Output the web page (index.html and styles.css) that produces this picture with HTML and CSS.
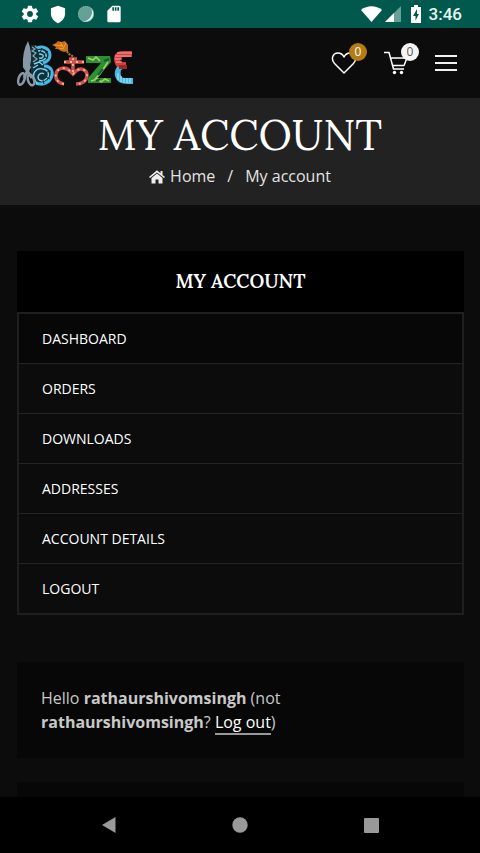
FILE: index.html
```
<!DOCTYPE html>
<html lang="en">
<head>
  <meta charset="UTF-8">
  <meta name="viewport" content="width=device-width, initial-scale=1.0">
  <title>My account</title>
  <link rel="stylesheet" href="styles.css">
</head>
<body>

  <div class="status-bar">
    <div class="status-group">
      <svg width="20" height="20" viewBox="0 0 24 24" fill="#fff"><path d="M19.4 13a7.500 7.500 0 0 0 0-2l2.100-1.600c.2-.2.3-.5.1-.7l-2-3.400c-.1-.2-.4-.3-.6-.2l-2.500 1a7.300 7.300 0 0 0-1.700-1l-.4-2.600a.5.5 0 0 0-.5-.5h-4a.5.5 0 0 0-.5.5L9 5.100a7.700 7.700 0 0 0-1.700 1l-2.500-1c-.2-.1-.5 0-.6.2l-2 3.400c-.1.200-.1.500.1.700L4.500 11a7.500 7.500 0 0 0 0 2l-2.100 1.600c-.2.200-.3.500-.1.700l2 3.400c.1.200.4.300.6.200l2.500-1c.5.400 1.100.7 1.700 1l.4 2.600c0 .300.200.5.5.5h4c.3 0 .5-.2.5-.5l.4-2.600a7.300 7.300 0 0 0 1.700-1l2.500 1c.2.100.5 0 .6-.2l2-3.400c.1-.2.100-.5-.1-.7zM12 15.500a3.500 3.500 0 1 1 0-7 3.500 3.500 0 0 1 0 7z"/></svg>
      <svg width="20" height="20" viewBox="0 0 24 24" fill="#fff"><path d="M12 2 3.500 5v6c0 5.500 3.500 9.500 8.500 12 5-2.500 8.500-6.500 8.500-12V5z"/></svg>
      <svg width="20" height="20" viewBox="0 0 20 20"><circle cx="10" cy="10" r="8" fill="#64a096"/><path d="M15 4a8 8 0 0 1-9 13 9 9 0 0 0 9-13z" fill="#e9f5f2"/><circle cx="10" cy="10" r="7.500" fill="none" stroke="#8abbb1" stroke-dasharray="1 1"/></svg>
      <svg width="20" height="20" viewBox="0 0 24 24" fill="#fff"><path d="M18 2h-8L4 8v12c0 1.100.9 2 2 2h12a2 2 0 0 0 2-2V4a2 2 0 0 0-2-2zm-6 6h-2V4h2zm3 0h-2V4h2zm3 0h-2V4h2z"/></svg>
    </div>
    <div class="status-group status-right">
      <svg width="21" height="18" viewBox="0 0 21 18" fill="#fff"><path d="M10.500 17 0 5C6 0 15 0 21 5z"/></svg>
      <svg width="17" height="18" viewBox="0 0 17 18"><path d="M17 1v16H1z" fill="#69a096"/><path d="M10 8v9H1z" fill="#fff"/></svg>
      <svg class="battery" width="12" height="18" viewBox="0 0 12 18"><path d="M4 0h4v2h3v16H1V2h3z" fill="#fff"/><path d="M7 4 3 11h2.500v4.500L9 9H7z" fill="#00594c"/></svg>
      <span class="clock">3:46</span>
    </div>
  </div>

  <header class="header">
    <a href="#" class="logo" aria-label="Home page">
      <svg width="118" height="52" viewBox="16 36 118 52">
        <!-- B with wave pattern -->
        <path d="M31 44h6l2 2c8-2 13 4 12 10-1 4-3 5-4 7 7 2 9 10 5 16-4 7-13 7-18 4l-3-8z" fill="#10303c"/>
        <path d="M37 47c6-3 13 1 13 7 0 5-4 7-7 8" fill="none" stroke="#48b9e4" stroke-width="3"/>
        <path d="M44 65c7 0 10 6 7 12-3 6-10 7-15 5" fill="none" stroke="#48b9e4" stroke-width="3"/>
        <g fill="none" stroke="#7fd3ec" stroke-width="1.400">
          <path d="M38 50c5-1 9 2 8 6-1 3-4 4-7 4M39 53c3 0 5 1 4 3-1 2-3 1-4 1"/>
          <path d="M35 80c-4-7 1-14 8-12 6 1 7 7 3 10-3 3-8 2-8-2 0-3 4-5 6-3M37 83l-3-6"/>
          <path d="M34 63l5-2 4 3M33 67l5-3"/>
        </g>
        <path d="M42 47l-2 5M48 50l-4 3M48 57l-4-1M51 70l-4 1M50 78l-4-2M44 83l-1-4" stroke="#10303c" stroke-width="1"/>
        <g fill="none" stroke="#8aa5ad" stroke-width="1.200">
          <path d="M32 46l3 2-3 2 4 2-3 3 4 3-4 3M35 45l2 2"/>
        </g>
        <!-- scissors -->
        <path d="M28 40q5 12 2 26l-4 3-3-3q-1-15 5-26z" fill="#8799a6"/>
        <path d="M24 65l8 12M30 65l-6 12" stroke="#8799a6" stroke-width="3"/>
        <g fill="none" stroke="#8799a6" stroke-width="2.500">
          <ellipse cx="21.500" cy="78" rx="3" ry="6" transform="rotate(18 21.500 78)"/>
          <ellipse cx="31" cy="79" rx="3" ry="5.500" transform="rotate(-18 31 79)"/>
        </g>
        <!-- flower and curved letter -->
        <path d="M52 44l4-2 2-2 3 1 4-1 3 4 0 6-4 1-3-1-3-2-3 0 1-2z" fill="#c96a17"/>
        <path d="M55 44l8 1M60 41l3 5M66 42l-3 6M59 47l4 1" stroke="#f0a33a"/>
        <path d="M65 48l4 5 5 3" fill="none" stroke="#a8803c" stroke-width="2" stroke-dasharray="2 1"/>
        <g fill="none" stroke="#d0504f" stroke-width="3.500">
          <path d="M64 61h20M69 58h8M73 57v15"/>
          <path d="M64 83c-6-1-9-5-8-10 1-6 9-8 14-3l3 3 3-3c5-4 11-1 11 4 0 6-5 9-11 9"/>
        </g>
        <g fill="none" stroke="#e8c08c" stroke-width="1.800" stroke-dasharray="2 4">
          <path d="M64 61h20M73 57v15"/>
          <path d="M64 83c-6-1-9-5-8-10 1-6 9-8 14-3l3 3 3-3c5-4 11-1 11 4 0 6-5 9-11 9"/>
        </g>
        <!-- Z -->
        <path d="M86 55h24l1 6-14 16h14v5H88v-5l13-15H86z" fill="#2f8f35"/>
        <path d="M88 57l5 2 3-3 4 4M95 78l5-5 2-3 6-9M91 80l7-2 3 3 4-3 4 2" fill="none" stroke="#9bd45c" stroke-width="1.600"/>
        <path d="M98 74l5-6M104 60l5-2M96 80l4-2" stroke="#125c2b" stroke-width="2"/>
        <!-- E -->
        <path d="M132 50h-9c-6 0-9 3-9 8 0 3 1 5 3 8h9v-5h-5c-1-3 0-5 3-5h8z" fill="#d83c43"/>
        <path d="M117 66c-3 4-3 9 0 13 3 4 8 4 16 4v-6h-9c-3 0-4-4-3-8l5-3z" fill="#45b9df"/>
        <path d="M117 52h15M115 55h16M115 58h7M116 61h6" stroke="#efaaa2"/>
        <path d="M118 72v7M121 75v6M124 77v5M127 77v5M130 77v5" stroke="#b5e8f3"/>
        <path d="M119 64h8v4h-8z" fill="#982b20"/>
      </svg>
    </a>
    <div class="header-tools">
      <a href="#" class="tool" aria-label="Wishlist">
        <svg width="26" height="24" viewBox="0 0 26 24" fill="none" stroke="#fff" stroke-width="1.500"><path d="M13 22 3.500 12.500C0 9 1 2 7 2c3 0 5 2 6 4 1-2 3-4 6-4 6 0 7 7 3.500 10.500z" stroke-linejoin="round"/></svg>
        <span class="badge badge-gold">0</span>
      </a>
      <a href="#" class="tool" aria-label="Cart">
        <svg width="26" height="24" viewBox="0 0 26 24" fill="none" stroke="#fff" stroke-width="1.500"><path d="M1 1.500h5L10.500 18H21M8 7h16l-3 7.500H10"/><circle cx="11.500" cy="21.500" r="1.700" fill="#fff" stroke="none"/><circle cx="18.500" cy="21.500" r="1.700" fill="#fff" stroke="none"/></svg>
        <span class="badge">0</span>
      </a>
      <button type="button" class="menu-btn" aria-label="Menu">
        <svg width="22" height="16" viewBox="0 0 22 16" fill="#f2f2f2"><path d="M0 0h22v2H0zM0 7h22v2H0zM0 14h22v2H0z"/></svg>
      </button>
    </div>
  </header>

  <main class="content">
    <div class="page-title">
      <h1>MY ACCOUNT</h1>
      <nav class="breadcrumbs">
        <a href="#">
          <svg width="16" height="14" viewBox="0 0 16 14" fill="#eee"><path d="M8 3.500 2.500 8v5.500H6.500V9.500h3v4h4V8z"/><path d="M8 .3 0 7l1 1.100L8 2.500l7 5.600L16 7l-2.500-2.100V1h-2v2.200z"/></svg>
          Home
        </a>
        <span>/</span>
        <span>My account</span>
      </nav>
    </div>

    <div class="account">
      <div class="account-nav">
        <h2>MY ACCOUNT</h2>
        <ul>
          <li class="active"><a href="#">DASHBOARD</a></li>
          <li><a href="#">ORDERS</a></li>
          <li><a href="#">DOWNLOADS</a></li>
          <li><a href="#">ADDRESSES</a></li>
          <li><a href="#">ACCOUNT DETAILS</a></li>
          <li><a href="#">LOGOUT</a></li>
        </ul>
      </div>

      <div class="account-box">
        <p>Hello <strong>rathaurshivomsingh</strong> (not <strong>rathaurshivomsingh</strong>? <a href="#">Log out</a>)</p>
      </div>
      <div class="account-box"></div>
    </div>
  </main>

  <div class="nav-bar">
    <button type="button" aria-label="Back"><svg width="16" height="16" viewBox="0 0 16 16" fill="#999"><path d="M1 8 14.500 0v16z"/></svg></button>
    <button type="button" aria-label="Home"><svg width="16" height="16" viewBox="0 0 16 16" fill="#999"><circle cx="8" cy="8" r="7.700"/></svg></button>
    <button type="button" aria-label="Recent apps"><svg width="16" height="16" viewBox="0 0 16 16" fill="#999"><rect x="1" y="1" width="15" height="15" rx="1"/></svg></button>
  </div>

</body>
</html>
```
FILE: styles.css
```
* {
  box-sizing: border-box;
}

body {
  font-family: "Open Sans", "Noto Sans", sans-serif;
  font-size: 16px;
  background-color: #0c0c0c;
  color: #c8c8c8;
  margin: 0;
  display: flex;
  flex-direction: column;
  height: 100vh;
}

a {
  color: #fff;
  text-decoration: none;
}

svg {
  display: block;
}

button {
  background: none;
  border: none;
  padding: 0;
  cursor: pointer;
}

.status-bar {
  flex: none;
  display: flex;
  justify-content: space-between;
  align-items: center;
  height: 28px;
  padding: 0 18px 0 20px;
  background-color: #00594c;
}

.status-group {
  display: flex;
  align-items: center;
  gap: 8px;
}

.status-right {
  gap: 2px;
}

.battery {
  margin-left: 7px;
}

.clock {
  margin-left: 5px;
  font-family: Roboto, sans-serif;
  font-size: 17px;
  font-weight: 500;
  color: #e8f5f2;
}

.header {
  flex: none;
  display: flex;
  justify-content: space-between;
  align-items: center;
  height: 70px;
  padding: 0 23px 0 16px;
}

.header-tools {
  display: flex;
  align-items: center;
  gap: 26px;
}

.tool {
  position: relative;
}

.badge {
  position: absolute;
  top: -8px;
  right: -10px;
  width: 18px;
  height: 18px;
  border-radius: 50%;
  background-color: #f5f5f5;
  color: #555;
  font-size: 12px;
  line-height: 18px;
  text-align: center;
}

.badge-gold {
  background-color: #b47c12;
  color: #fff;
}

.content {
  flex: 1;
  min-height: 0;
  overflow: hidden;
}

.page-title {
  padding: 12px 16px 15px;
  background-color: #222;
  text-align: center;
}

h1 {
  margin: 0 0 3px;
  font-family: Lora, "Liberation Serif", serif;
  font-size: 42px;
  font-weight: 400;
  line-height: 50px;
  color: #fff;
}

.breadcrumbs {
  display: flex;
  justify-content: center;
  gap: 12px;
  line-height: 27px;
  color: #e4e4e4;
}

.breadcrumbs a {
  display: flex;
  align-items: center;
  gap: 5px;
  color: #e4e4e4;
}

.account {
  padding: 46px 16px 0 17px;
}

.account-nav {
  margin-bottom: 47px;
}

h2 {
  margin: 0;
  padding: 16px;
  background-color: #000;
  color: #fff;
  font-family: Lora, "Liberation Serif", serif;
  font-size: 19px;
  font-weight: 600;
  line-height: 29px;
  text-align: center;
}

ul {
  list-style: none;
  margin: 0;
  padding: 0;
  border: 2px solid #1f1f1f;
}

li + li {
  border-top: 1px solid #242424;
}

li a {
  display: block;
  padding: 0 23px;
  font-size: 14px;
  line-height: 49px;
}

.active {
  background-color: #070707;
}

.account-box {
  padding: 24px;
  margin-bottom: 24px;
  background-color: #070707;
}

.account-box p {
  margin: 0;
  line-height: 24px;
}

.account-box a {
  border-bottom: 2px solid #999;
}

.nav-bar {
  flex: none;
  display: flex;
  justify-content: space-between;
  align-items: center;
  height: 56px;
  padding: 0 21%;
  background-color: #000;
}
```
